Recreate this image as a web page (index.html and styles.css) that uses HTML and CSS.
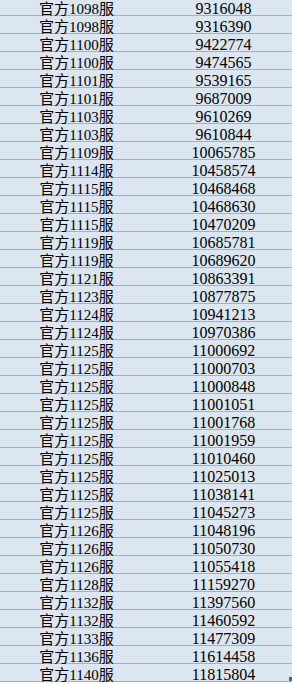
FILE: index.html
```html
<!DOCTYPE html>
<html lang="zh-CN">
<head>
<meta charset="utf-8">
<link rel="stylesheet" href="styles.css">
</head>
<body>
<div class="sheet">
<div class="row"><div class="c1">官方<span class="n">1098</span>服</div><div class="c2">9316048</div></div>
<div class="row"><div class="c1">官方<span class="n">1098</span>服</div><div class="c2">9316390</div></div>
<div class="row"><div class="c1">官方<span class="n">1100</span>服</div><div class="c2">9422774</div></div>
<div class="row"><div class="c1">官方<span class="n">1100</span>服</div><div class="c2">9474565</div></div>
<div class="row"><div class="c1">官方<span class="n">1101</span>服</div><div class="c2">9539165</div></div>
<div class="row"><div class="c1">官方<span class="n">1101</span>服</div><div class="c2">9687009</div></div>
<div class="row"><div class="c1">官方<span class="n">1103</span>服</div><div class="c2">9610269</div></div>
<div class="row"><div class="c1">官方<span class="n">1103</span>服</div><div class="c2">9610844</div></div>
<div class="row"><div class="c1">官方<span class="n">1109</span>服</div><div class="c2">10065785</div></div>
<div class="row"><div class="c1">官方<span class="n">1114</span>服</div><div class="c2">10458574</div></div>
<div class="row"><div class="c1">官方<span class="n">1115</span>服</div><div class="c2">10468468</div></div>
<div class="row"><div class="c1">官方<span class="n">1115</span>服</div><div class="c2">10468630</div></div>
<div class="row"><div class="c1">官方<span class="n">1115</span>服</div><div class="c2">10470209</div></div>
<div class="row"><div class="c1">官方<span class="n">1119</span>服</div><div class="c2">10685781</div></div>
<div class="row"><div class="c1">官方<span class="n">1119</span>服</div><div class="c2">10689620</div></div>
<div class="row"><div class="c1">官方<span class="n">1121</span>服</div><div class="c2">10863391</div></div>
<div class="row"><div class="c1">官方<span class="n">1123</span>服</div><div class="c2">10877875</div></div>
<div class="row"><div class="c1">官方<span class="n">1124</span>服</div><div class="c2">10941213</div></div>
<div class="row"><div class="c1">官方<span class="n">1124</span>服</div><div class="c2">10970386</div></div>
<div class="row"><div class="c1">官方<span class="n">1125</span>服</div><div class="c2">11000692</div></div>
<div class="row"><div class="c1">官方<span class="n">1125</span>服</div><div class="c2">11000703</div></div>
<div class="row"><div class="c1">官方<span class="n">1125</span>服</div><div class="c2">11000848</div></div>
<div class="row"><div class="c1">官方<span class="n">1125</span>服</div><div class="c2">11001051</div></div>
<div class="row"><div class="c1">官方<span class="n">1125</span>服</div><div class="c2">11001768</div></div>
<div class="row"><div class="c1">官方<span class="n">1125</span>服</div><div class="c2">11001959</div></div>
<div class="row"><div class="c1">官方<span class="n">1125</span>服</div><div class="c2">11010460</div></div>
<div class="row"><div class="c1">官方<span class="n">1125</span>服</div><div class="c2">11025013</div></div>
<div class="row"><div class="c1">官方<span class="n">1125</span>服</div><div class="c2">11038141</div></div>
<div class="row"><div class="c1">官方<span class="n">1125</span>服</div><div class="c2">11045273</div></div>
<div class="row"><div class="c1">官方<span class="n">1126</span>服</div><div class="c2">11048196</div></div>
<div class="row"><div class="c1">官方<span class="n">1126</span>服</div><div class="c2">11050730</div></div>
<div class="row"><div class="c1">官方<span class="n">1126</span>服</div><div class="c2">11055418</div></div>
<div class="row"><div class="c1">官方<span class="n">1128</span>服</div><div class="c2">11159270</div></div>
<div class="row"><div class="c1">官方<span class="n">1132</span>服</div><div class="c2">11397560</div></div>
<div class="row"><div class="c1">官方<span class="n">1132</span>服</div><div class="c2">11460592</div></div>
<div class="row"><div class="c1">官方<span class="n">1133</span>服</div><div class="c2">11477309</div></div>
<div class="row"><div class="c1">官方<span class="n">1136</span>服</div><div class="c2">11614458</div></div>
<div class="row last"><div class="c1">官方<span class="n">1140</span>服</div><div class="c2">11815804</div><span class="handle"></span></div>
</div>
</body>
</html>
```

FILE: styles.css
```css
html, body {
  margin: 0;
  padding: 0;
  background: #ffffff;
  overflow: hidden;
}

.sheet {
  margin-top: -2px;
  width: 292px;
  overflow: hidden;
}

.row {
  position: relative;
  display: grid;
  grid-template-columns: 153px 141px;
  height: 18px;
  box-sizing: border-box;
  background: #dce6f1;
  border-bottom: 1px solid #95b3d7;
  color: #000;
}

.c1 {
  box-sizing: border-box;
  height: 17px;
  padding-top: 2px;
  line-height: 15px;
  text-align: center;
  font-family: "Noto Sans CJK SC", sans-serif;
  font-size: 15px;
  white-space: nowrap;
}

.n {
  font-family: "Liberation Serif", serif;
  font-size: 15px;
}

.c2 {
  box-sizing: border-box;
  height: 17px;
  padding-top: 3px;
  line-height: 15px;
  text-align: center;
  font-family: "Liberation Serif", serif;
  font-size: 16px;
  white-space: nowrap;
}

.handle {
  position: absolute;
  right: 0;
  bottom: 0;
  width: 3px;
  height: 4px;
  background: #4a5fc6;
}
```
